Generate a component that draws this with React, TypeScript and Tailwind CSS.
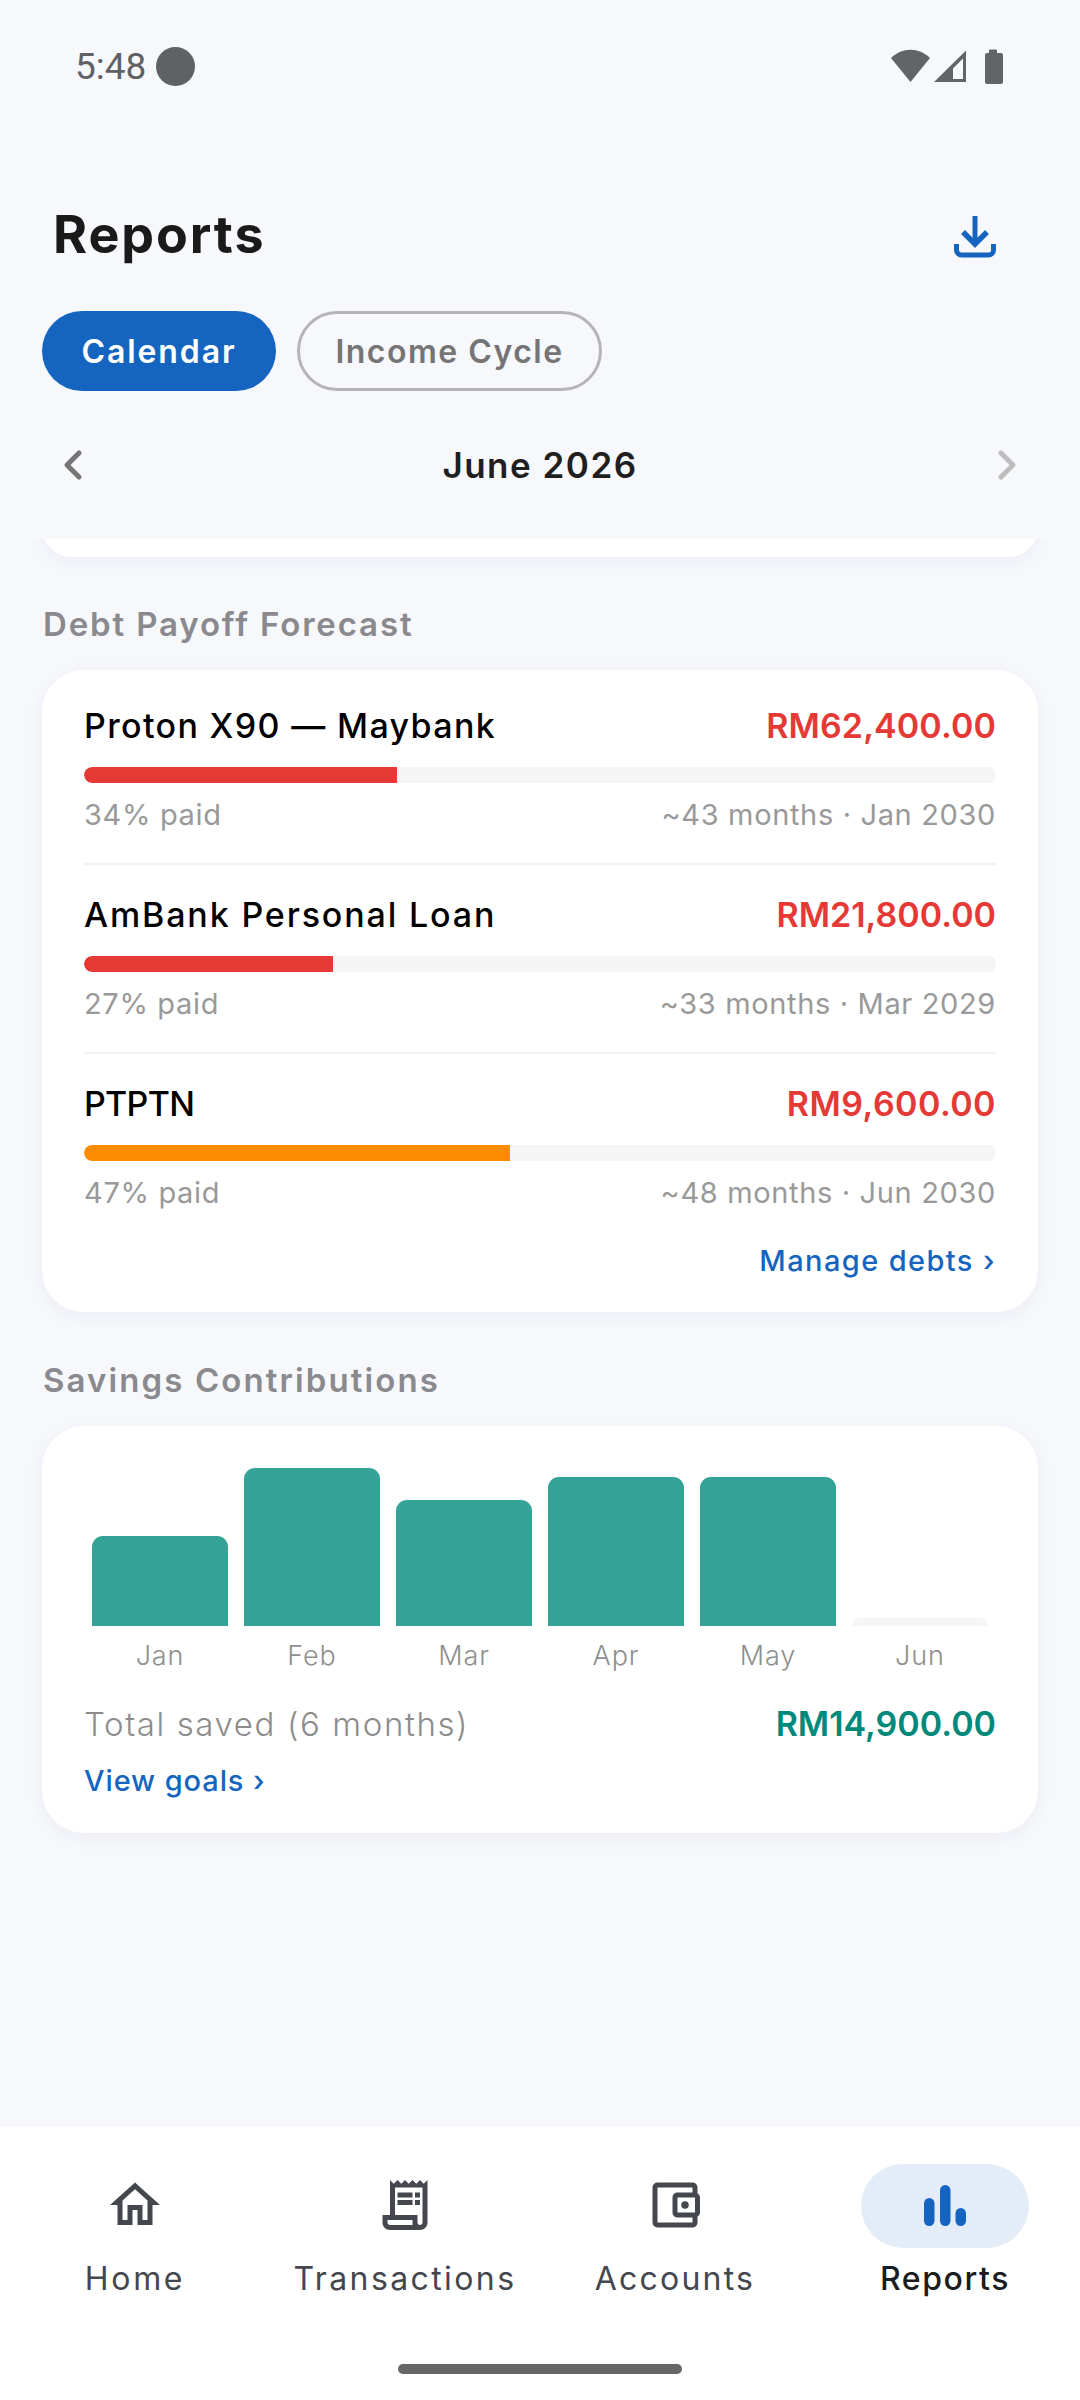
import React from "react";
import { MdOutlineHome, MdOutlineReceiptLong, MdOutlineAccountBalanceWallet } from "react-icons/md";

const debts = [
  { name: "Proton X90 — Maybank", nameTrack: "tracking-[1.35px]", amount: "RM62,400.00", amtTrack: "tracking-[0.1px]", pct: 34.3, paid: "34% paid", eta: "~43 months · Jan 2030", fill: "bg-[#e53935]" },
  { name: "AmBank Personal Loan", nameTrack: "tracking-[1.85px]", amount: "RM21,800.00", amtTrack: "tracking-[0px]", pct: 27.3, paid: "27% paid", eta: "~33 months · Mar 2029", fill: "bg-[#e53935]" },
  { name: "PTPTN", nameTrack: "tracking-[-0.7px]", amount: "RM9,600.00", amtTrack: "tracking-[0.45px]", pct: 46.7, paid: "47% paid", eta: "~48 months · Jun 2030", fill: "bg-[#fb8c00]" },
];

const bars = [
  { m: "Jan", h: 90, on: true },
  { m: "Feb", h: 158, on: true },
  { m: "Mar", h: 126, on: true },
  { m: "Apr", h: 149, on: true },
  { m: "May", h: 149, on: true },
  { m: "Jun", h: 8, on: false },
];

function NavItem({ label, track, active, children }: { label: string; track: string; active?: boolean; children: React.ReactNode }) {
  return (
    <div className="flex flex-col items-center">
      <div className={`flex h-[84px] w-[168px] items-center justify-center rounded-full ${active ? "bg-[#e3ecf7]" : ""}`}>
        <div className={active ? "mb-[4px]" : "mb-[2px]"}>{children}</div>
      </div>
      <div className={`mt-[9px] flex h-[44px] items-center text-[32px] leading-none ${track} ${active ? "text-[#1a1c20] font-medium" : "text-[#44474e]"}`}>
        {label}
      </div>
    </div>
  );
}

export default function App() {
  return (
    <div className="flex h-[2400px] w-[1080px] flex-col overflow-hidden bg-[#f7f8fc] font-['Inter',sans-serif]">
      <div className="flex h-[130px] shrink-0 items-center justify-between pl-[75px] pr-[75px] pt-[3px]">
        <div className="flex items-center gap-[10px]">
          <span className="font-['Roboto',sans-serif] text-[37px] leading-none text-[#5f6164]">5:48</span>
          <span className="h-[39px] w-[39px] rounded-full bg-[#5f6164]" />
        </div>
        <div className="flex items-center text-[#636466]">
          <svg width="116" height="36" viewBox="0 0 116 36" fill="currentColor">
            <path d="M2 9 C 13 -2, 30 -2, 41 9 L 21.5 33 Z" />
            <path fillRule="evenodd" d="M45 33 L77 1.5 V33 Z M64 19.5 L74 9.5 V30 H64 Z" />
            <path d="M100 1.5 a1 1 0 0 1 1 -1 h6 a1 1 0 0 1 1 1 V4 h4 a2 2 0 0 1 2 2 V33 a2 2 0 0 1 -2 2 H98 a2 2 0 0 1 -2 -2 V6 a2 2 0 0 1 2 -2 h2 Z" />
          </svg>
        </div>
      </div>

      <div className="mt-[60px] flex h-[90px] shrink-0 items-center justify-between pl-[53px] pr-[84px]">
        <h1 className="text-[52px] font-bold leading-none tracking-[1.9px] text-[#1a1a1a]">Reports</h1>
        <svg width="42" height="46" viewBox="0 0 42 46" fill="none" stroke="#1565c0" strokeWidth="5">
          <path d="M21 4 V32" />
          <path d="M9 20 L21 32 L33 20" strokeWidth="5.5" />
          <path d="M2.5 32 V38 a5 5 0 0 0 5 5 H34.5 a5 5 0 0 0 5 -5 V32" />
        </svg>
      </div>

      <div className="mt-[31px] flex shrink-0 gap-[21px] pl-[42px]">
        <div className="flex h-[80px] w-[234px] items-center justify-center rounded-full bg-[#1565c0] pt-[2px] text-[32px] font-semibold leading-none tracking-[1.9px] text-white">
          Calendar
        </div>
        <div className="flex h-[80px] w-[305px] items-center justify-center rounded-full border-[3px] border-[#b5b5b8] pt-[2px] text-[32px] font-semibold leading-none tracking-[1.5px] text-[#757575]">
          Income Cycle
        </div>
      </div>

      <div className="mt-[35px] flex h-[80px] shrink-0 items-center justify-between pb-[2px] pl-[61px] pr-[61px]">
        <svg width="24" height="32" viewBox="0 0 24 32" fill="none" stroke="#757575" strokeWidth="5" strokeLinecap="round" strokeLinejoin="round">
          <path d="M18 4 L6 16 L18 28" />
        </svg>
        <span className="text-[35px] font-semibold leading-none tracking-[1.5px] text-[#1f1f1f]">June 2026</span>
        <svg width="24" height="32" viewBox="0 0 24 32" fill="none" stroke="#bdbdbd" strokeWidth="5" strokeLinecap="round" strokeLinejoin="round">
          <path d="M6 4 L18 16 L6 28" />
        </svg>
      </div>

      <main className="mt-[33px] min-h-0 flex-1 overflow-hidden px-[42px]">
        <div className="-mt-[42px] h-[60px] rounded-[42px] bg-white shadow-[0_4px_20px_rgba(30,40,80,0.05)]" />

        <div className="mt-[44px] flex h-[44px] items-center pl-px pt-[2px] text-[33px] font-semibold leading-none tracking-[1.85px] text-[#8a8a8e]">
          Debt Payoff Forecast
        </div>

        <section className="mt-[25px] rounded-[42px] bg-white px-[42px] pb-[31px] pt-[34px] shadow-[0_4px_20px_rgba(30,40,80,0.05)]">
          {debts.map((d, i) => (
            <div key={d.name}>
              {i > 0 && <div className="my-[28px] h-[2px] bg-[#f3f3f4]" />}
              <div className="flex h-[44px] items-center justify-between">
                <span className={`text-[34px] font-medium leading-none text-black ${d.nameTrack}`}>{d.name}</span>
                <span className={`text-[34px] font-semibold leading-none text-[#e53935] ${d.amtTrack}`}>{d.amount}</span>
              </div>
              <div className="mt-[19px] h-[16px] overflow-hidden rounded-full bg-[#f5f5f5]">
                <div className={`h-full rounded-l-full ${d.fill}`} style={{ width: `${d.pct}%` }} />
              </div>
              <div className="mt-[12px] flex h-[40px] items-center justify-between pb-[2px] text-[29px] leading-none tracking-[0.65px] text-[#999999]">
                <span>{d.paid}</span>
                <span>{d.eta}</span>
              </div>
            </div>
          ))}
          <div className="mt-[28px] flex h-[40px] items-center justify-end pb-[2px] text-[29px] font-medium leading-none tracking-[1.4px] text-[#1565c0]">
            Manage debts ›
          </div>
        </section>

        <div className="mt-[46px] flex h-[44px] items-center pl-px text-[33px] font-semibold leading-none tracking-[2.1px] text-[#8a8a8e]">
          Savings Contributions
        </div>

        <section className="mt-[24px] rounded-[42px] bg-white px-[42px] pb-[32px] pt-[42px] shadow-[0_4px_20px_rgba(30,40,80,0.05)]">
          <div className="grid h-[158px] grid-cols-6 items-end">
            {bars.map((b) => (
              <div key={b.m} className="px-[8px]">
                <div
                  className={`rounded-t-[11px] ${b.on ? "bg-[#33a297]" : "bg-[#f5f5f5]"}`}
                  style={{ height: `${b.h}px` }}
                />
              </div>
            ))}
          </div>
          <div className="mt-[12px] grid h-[36px] grid-cols-6 items-center">
            {bars.map((b) => (
              <span key={b.m} className="pb-[2px] text-center text-[27px] font-light leading-none tracking-[0.9px] text-[#8f8f8f]">
                {b.m}
              </span>
            ))}
          </div>
          <div className="mt-[28px] flex h-[44px] items-center justify-between">
            <span className="text-[33px] font-light leading-none tracking-[1.6px] text-[#8c8c8c]">Total saved (6 months)</span>
            <span className="text-[34px] font-semibold leading-none tracking-[0px] text-[#00897b]">RM14,900.00</span>
          </div>
          <div className="mt-[15px] flex h-[40px] items-center pb-[2px] text-[29px] font-medium leading-none tracking-[0.9px] text-[#1565c0]">
            View goals ›
          </div>
        </section>
      </main>

      <nav className="flex h-[273px] shrink-0 flex-col bg-white pt-[37px]">
        <div className="grid grid-cols-4">
          <NavItem label="Home" track="tracking-[2.7px]"><MdOutlineHome size={60} className="text-[#44474e]" /></NavItem>
          <NavItem label="Transactions" track="tracking-[2.4px]"><MdOutlineReceiptLong size={60} className="text-[#44474e]" /></NavItem>
          <NavItem label="Accounts" track="tracking-[2.2px]"><MdOutlineAccountBalanceWallet size={60} className="text-[#44474e]" /></NavItem>
          <NavItem label="Reports" track="tracking-[1.6px]" active>
            <svg width="60" height="60" viewBox="0 0 60 60" fill="#1565c0" className="block">
              <rect x="9" y="24" width="10.5" height="28" rx="5.25" />
              <rect x="25" y="11" width="10.5" height="41" rx="5.25" />
              <rect x="40.5" y="34" width="10.5" height="18" rx="5.25" />
            </svg>
          </NavItem>
        </div>
        <div className="mx-auto mt-[63px] h-[10px] w-[284px] rounded-full bg-[#666666]" />
      </nav>
    </div>
  );
}
